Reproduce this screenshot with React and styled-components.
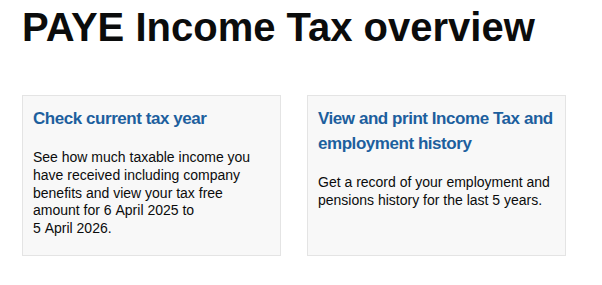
import React from "react";
import styled, { createGlobalStyle } from "styled-components";

const GlobalStyle = createGlobalStyle`
  html, body {
    margin: 0;
    padding: 0;
    background: #ffffff;
  }
  body {
    font-family: "Liberation Sans", Arial, sans-serif;
    color: #0b0c0c;
  }
`;

const cards = [
  {
    title: "Check current tax year",
    text: (
      <>
        See how much taxable income you have received including company
        benefits and view your tax free amount for 6&nbsp;April&nbsp;2025 to
        5&nbsp;April&nbsp;2026.
      </>
    )
  },
  {
    title: "View and print Income Tax and employment history",
    text: "Get a record of your employment and pensions history for the last 5 years."
  }
];

const App = () => {
  return (
    <Page>
      <GlobalStyle />
      <Heading>PAYE Income Tax overview</Heading>
      <CardGrid>
        {cards.map((card) => (
          <Card key={card.title}>
            <CardTitle href="#">{card.title}</CardTitle>
            <CardText>{card.text}</CardText>
          </Card>
        ))}
      </CardGrid>
    </Page>
  );
};

const Page = styled.div`
  padding: 0 22px;
`;

const Heading = styled.h1`
  margin: 0;
  padding-top: 3px;
  font-size: 40px;
  line-height: 48px;
  font-weight: 700;
  color: #0b0c0c;
`;

const CardGrid = styled.div`
  display: grid;
  grid-template-columns: 259px 259px;
  column-gap: 26px;
  margin-top: 44px;
`;

const Card = styled.div`
  box-sizing: border-box;
  height: 161px;
  padding: 10px 10px;
  background: #f8f8f8;
  border: 1px solid #e4e4e4;
`;

const CardTitle = styled.a`
  display: block;
  font-size: 17px;
  line-height: 25px;
  font-weight: 700;
  letter-spacing: -0.45px;
  color: #1d5f9e;
  text-decoration: none;
  margin-bottom: 18px;
`;

const CardText = styled.p`
  margin: 0;
  font-size: 14px;
  line-height: 17.8px;
  color: #0b0c0c;
`;

export default App;
